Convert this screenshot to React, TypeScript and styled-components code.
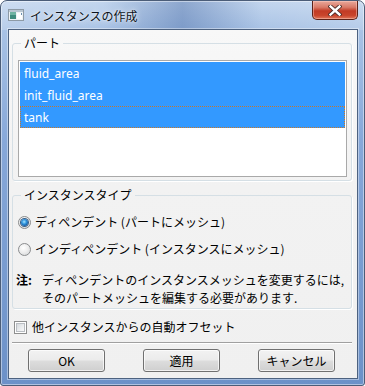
import React from 'react';
import styled, { createGlobalStyle } from 'styled-components';

const GlobalStyle = createGlobalStyle`
    html, body {
        margin: 0;
        padding: 0;
        background: #ffffff;
    }
    body {
        font-family: "Noto Sans CJK JP", "Noto Sans", sans-serif;
        font-size: 12px;
        color: #000000;
    }
`;

const FONT = `"Noto Sans CJK JP", "Noto Sans", sans-serif`;
const LATIN = `"Noto Sans", "Noto Sans CJK JP", sans-serif`;

const Window = styled.div`
    width: 365px;
    height: 386px;
    box-sizing: border-box;
    display: flex;
    flex-direction: column;
    padding: 0 6px 6px 7px;
    border: 1px solid #4b5d78;
    border-radius: 7px 7px 3px 3px;
    background:
        linear-gradient(90deg, rgba(255, 255, 255, 0.18) 0%, rgba(255, 255, 255, 0) 28%, rgba(30, 70, 140, 0.32) 50%, rgba(255, 255, 255, 0) 72%, rgba(255, 255, 255, 0.15) 100%) top / 100% 29px no-repeat,
        linear-gradient(180deg, #c3d6ee 0px, #a8c2e5 30px, #87a8d9 140px, #6c91c8 100%);
    box-shadow: inset 0 0 0 1px rgba(255, 255, 255, 0.45);
`;

const TitleBar = styled.div`
    height: 28px;
    flex: none;
    display: flex;
    align-items: flex-start;
`;

const AppIcon = styled.svg`
    margin-top: 8px;
    flex: none;
`;

const TitleText = styled.div`
    height: 16px;
    margin-left: 6px;
    margin-top: 7px;
    font-family: ${FONT};
    font-size: 12px;
    line-height: 16px;
    color: #0d1420;
    text-shadow: 0 0 6px rgba(255, 255, 255, 0.9), 0 0 2px rgba(255, 255, 255, 0.8);
    flex: 1;
`;

const CloseButton = styled.div`
    width: 46px;
    height: 19px;
    box-sizing: border-box;
    border: 1px solid #5c2219;
    border-top: none;
    border-radius: 0 0 5px 5px;
    background: linear-gradient(180deg, #e9a99b 0%, #d87a68 35%, #c23b25 55%, #c9452c 80%, #e0765a 100%);
    box-shadow: inset 0 0 0 1px rgba(255, 210, 200, 0.45);
    display: flex;
    align-items: center;
    justify-content: center;
`;

const Client = styled.div`
    flex: 1;
    display: flex;
    flex-direction: column;
    box-sizing: border-box;
    padding: 5px 5px 0 3px;
    border: 1px solid #4d6280;
    background: linear-gradient(180deg, #f8f8f8 0%, #f2f2f2 45%, #f0f0f0 100%);
    box-shadow: 0 0 0 1px rgba(255, 255, 255, 0.4);
`;

const Group = styled.fieldset<{ $gap?: number; $padBottom?: number }>`
    margin: ${({ $gap }) => $gap ?? 0}px 0 0 0;
    padding: 9px 4px ${({ $padBottom }) => $padBottom ?? 3}px 5px;
    border: 1px solid #d5dfe5;
    border-radius: 3px;
    box-shadow: 1px 1px 0 #ffffff;
    min-width: 0;
`;

const Legend = styled.legend`
    height: 16px;
    margin-left: 3px;
    padding: 0 3px;
    font-family: ${FONT};
    font-size: 12px;
    line-height: 16px;
    color: #000000;
`;

const ListBox = styled.div`
    height: 117px;
    box-sizing: border-box;
    border: 1px solid #a9a9a9;
    background: #ffffff;
    padding: 1px;
`;

const ListItem = styled.div<{ $selected?: boolean; $focused?: boolean }>`
    height: 22px;
    box-sizing: border-box;
    padding-left: 3px;
    display: flex;
    align-items: center;
    font-family: ${LATIN};
    font-size: 12px;
    color: ${({ $selected }) => ($selected ? '#ffffff' : '#000000')};
    background: ${({ $selected }) => ($selected ? '#3399ff' : 'transparent')};
    border: 1px ${({ $focused }) => ($focused ? 'dotted #c8782a' : 'solid transparent')};
`;

const OptionRow = styled.label<{ $gap?: number }>`
    height: 20px;
    margin-top: ${({ $gap }) => $gap ?? 0}px;
    display: flex;
    align-items: center;
    gap: 4px;
    font-family: ${FONT};
    font-size: 12px;
    line-height: 20px;
    white-space: nowrap;
`;

const Radio = styled.span<{ $checked?: boolean }>`
    width: 13px;
    height: 13px;
    box-sizing: border-box;
    border-radius: 50%;
    border: 1px solid #8a8c8e;
    background: radial-gradient(circle at 40% 35%, #ffffff 0%, #eeeeee 45%, #cfd1d3 100%);
    display: flex;
    align-items: center;
    justify-content: center;
    flex: none;

    &::after {
        content: '';
        width: 7px;
        height: 7px;
        border-radius: 50%;
        display: ${({ $checked }) => ($checked ? 'block' : 'none')};
        background: radial-gradient(circle at 45% 40%, #a6e6ff 0%, #2f92dc 40%, #0f4f94 80%, #0a3466 100%);
        box-shadow: 0 0 0 1px #3a5f86;
    }
`;

const Note = styled.div`
    margin: 12px 0 1px -2px;
    display: grid;
    grid-template-columns: 26px 1fr;
    grid-auto-rows: 18px;
    font-family: ${FONT};
    font-size: 12px;
    line-height: 18px;
    white-space: nowrap;
`;

const NoteLabel = styled.span`
    font-weight: 700;
`;

const NoteLine = styled.span`
    grid-column: 2;
    height: 18px;
`;

const CheckRow = styled.label`
    height: 16px;
    margin: 10px 0 0 2px;
    display: flex;
    align-items: center;
    gap: 5px;
    font-family: ${FONT};
    font-size: 12px;
    line-height: 16px;
`;

const CheckBox = styled.span`
    width: 13px;
    height: 13px;
    box-sizing: border-box;
    border: 1px solid #8e8f8f;
    padding: 1px;
    background: #ffffff;
    flex: none;

    &::after {
        content: '';
        display: block;
        width: 9px;
        height: 9px;
        box-sizing: border-box;
        border: 1px solid #b9bdc2;
        background: linear-gradient(135deg, #d6d9dd 0%, #eceef0 60%, #f8f8f8 100%);
    }
`;

const Separator = styled.div`
    height: 1px;
    flex: none;
    margin-top: 7px;
    background: #a0a0a0;
    box-shadow: 0 1px 0 #ffffff;
`;

const ButtonRow = styled.div`
    margin-top: 6px;
    padding-left: 16px;
    display: flex;
    gap: 38px;
`;

const Button = styled.button`
    width: 77px;
    height: 23px;
    box-sizing: border-box;
    padding: 0;
    border: 1px solid #707070;
    border-radius: 3px;
    background: linear-gradient(180deg, #f2f2f2 0%, #ebebeb 48%, #dddddd 52%, #cfcfcf 100%);
    box-shadow: inset 0 0 0 1px rgba(255, 255, 255, 0.7);
    font-family: ${FONT};
    font-size: 12px;
    color: #000000;
    line-height: 20px;
`;

const parts = ['fluid_area', 'init_fluid_area', 'tank'];

const App: React.FC = () => {
    return (
        <>
            <GlobalStyle />
            <Window>
                <TitleBar>
                    <AppIcon width="16" height="12" viewBox="0 0 16 12">
                        <rect x="0.5" y="0.5" width="15" height="11" fill="#eef3f6" stroke="#8d9aa6" />
                        <rect x="1" y="1" width="14" height="2" fill="#b9c6d2" />
                        <rect x="2" y="3" width="6" height="7" fill="#3f8c7e" />
                        <rect x="2" y="3" width="6" height="3" fill="#6fb3a2" />
                        <rect x="9" y="4" width="5" height="6" fill="#ffffff" />
                        <rect x="13" y="4" width="1" height="2" fill="#6a8fb0" />
                    </AppIcon>
                    <TitleText>インスタンスの作成</TitleText>
                    <CloseButton>
                        <svg width="14" height="11" viewBox="0 0 14 11">
                            <path d="M2.5 1.5 L11.5 9.5 M11.5 1.5 L2.5 9.5" stroke="#4a2a26" strokeWidth="4.2" strokeLinecap="square" />
                            <path d="M2.5 1.5 L11.5 9.5 M11.5 1.5 L2.5 9.5" stroke="#ffffff" strokeWidth="2.4" strokeLinecap="square" />
                        </svg>
                    </CloseButton>
                </TitleBar>
                <Client>
                    <Group>
                        <Legend>パート</Legend>
                        <ListBox>
                            {parts.map((part, index) => (
                                <ListItem key={part} $selected $focused={index === parts.length - 1}>
                                    {part}
                                </ListItem>
                            ))}
                        </ListBox>
                    </Group>
                    <Group $gap={6} $padBottom={0}>
                        <Legend>インスタンスタイプ</Legend>
                        <OptionRow>
                            <Radio $checked />
                            ディペンデント (パートにメッシュ)
                        </OptionRow>
                        <OptionRow $gap={7}>
                            <Radio />
                            インディペンデント (インスタンスにメッシュ)
                        </OptionRow>
                        <Note>
                            <NoteLabel>注:</NoteLabel>
                            <NoteLine>ディペンデントのインスタンスメッシュを変更するには,</NoteLine>
                            <NoteLine>そのパートメッシュを編集する必要があります.</NoteLine>
                        </Note>
                    </Group>
                    <CheckRow>
                        <CheckBox />
                        他インスタンスからの自動オフセット
                    </CheckRow>
                    <Separator />
                    <ButtonRow>
                        <Button>OK</Button>
                        <Button>適用</Button>
                        <Button>キャンセル</Button>
                    </ButtonRow>
                </Client>
            </Window>
        </>
    );
};

export default App;
